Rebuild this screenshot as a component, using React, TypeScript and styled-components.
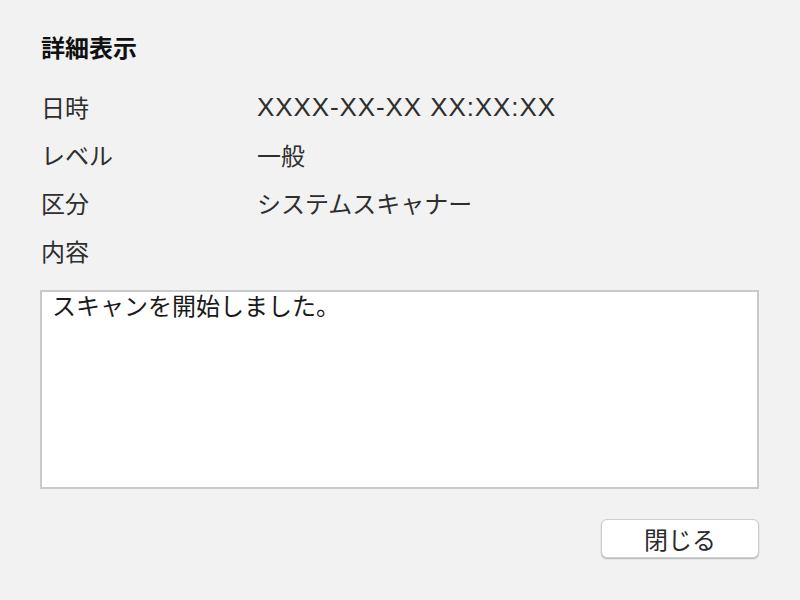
import React from "react";
import styled, { createGlobalStyle } from "styled-components";

const Global = createGlobalStyle`
  html, body {
    margin: 0;
    padding: 0;
    background: #f2f2f2;
  }
  body {
    font-family: "Noto Sans CJK JP", "Noto Sans", sans-serif;
    color: #2a2a2a;
  }
`;

const Dialog = styled.div`
  width: 800px;
  height: 600px;
  box-sizing: border-box;
  padding: 31px 41px 0 40px;
  display: flex;
  flex-direction: column;
  background: #f2f2f2;
`;

const Title = styled.h1`
  margin: 0;
  height: 32px;
  line-height: 32px;
  font-size: 24px;
  font-weight: 700;
  color: #111;
  padding-left: 1px;
`;

const Fields = styled.div`
  margin-top: 20px;
  display: grid;
  grid-template-columns: 217px 1fr;
  grid-auto-rows: 48px;
  align-items: center;
`;

const Label = styled.div`
  font-size: 24px;
  line-height: 30px;
  padding-left: 1px;
  color: #2e2e2e;
`;

const Value = styled.div<{ $latin?: boolean }>`
  font-size: ${(p) => (p.$latin ? "26px" : "24px")};
  line-height: 30px;
  font-family: ${(p) =>
    p.$latin
      ? `"Liberation Sans", "Noto Sans CJK JP", sans-serif`
      : `"Noto Sans CJK JP", sans-serif`};
  letter-spacing: ${(p) => (p.$latin ? "0.9px" : "0")};
  color: #2e2e2e;
`;

const ContentBox = styled.div`
  margin-top: 15px;
  height: 199px;
  box-sizing: border-box;
  border: 2px solid #c9c9c9;
  background: #fff;
  padding: 0 10px;
  font-size: 24px;
  line-height: 25px;
  color: #1a1a1a;
`;

const Footer = styled.div`
  margin-top: 30px;
  display: flex;
  justify-content: flex-end;
`;

const Button = styled.button`
  width: 158px;
  height: 39px;
  box-sizing: border-box;
  border: 1px solid #cfcfcf;
  border-radius: 6px;
  background: #fff;
  box-shadow: 0 1px 1.5px rgba(0, 0, 0, 0.28);
  font-family: "Noto Sans CJK JP", sans-serif;
  font-size: 24px;
  color: #2a2a2a;
  padding: 0;
  display: flex;
  align-items: center;
  justify-content: center;
`;

export default function App() {
  const rows: { label: string; value: string; latin?: boolean }[] = [
    { label: "日時", value: "XXXX-XX-XX XX:XX:XX", latin: true },
    { label: "レベル", value: "一般" },
    { label: "区分", value: "システムスキャナー" },
    { label: "内容", value: "" },
  ];
  return (
    <>
      <Global />
      <Dialog>
        <Title>詳細表示</Title>
        <Fields>
          {rows.map((r) => (
            <React.Fragment key={r.label}>
              <Label>{r.label}</Label>
              <Value $latin={r.latin}>{r.value}</Value>
            </React.Fragment>
          ))}
        </Fields>
        <ContentBox>スキャンを開始しました。</ContentBox>
        <Footer>
          <Button>閉じる</Button>
        </Footer>
      </Dialog>
    </>
  );
}
